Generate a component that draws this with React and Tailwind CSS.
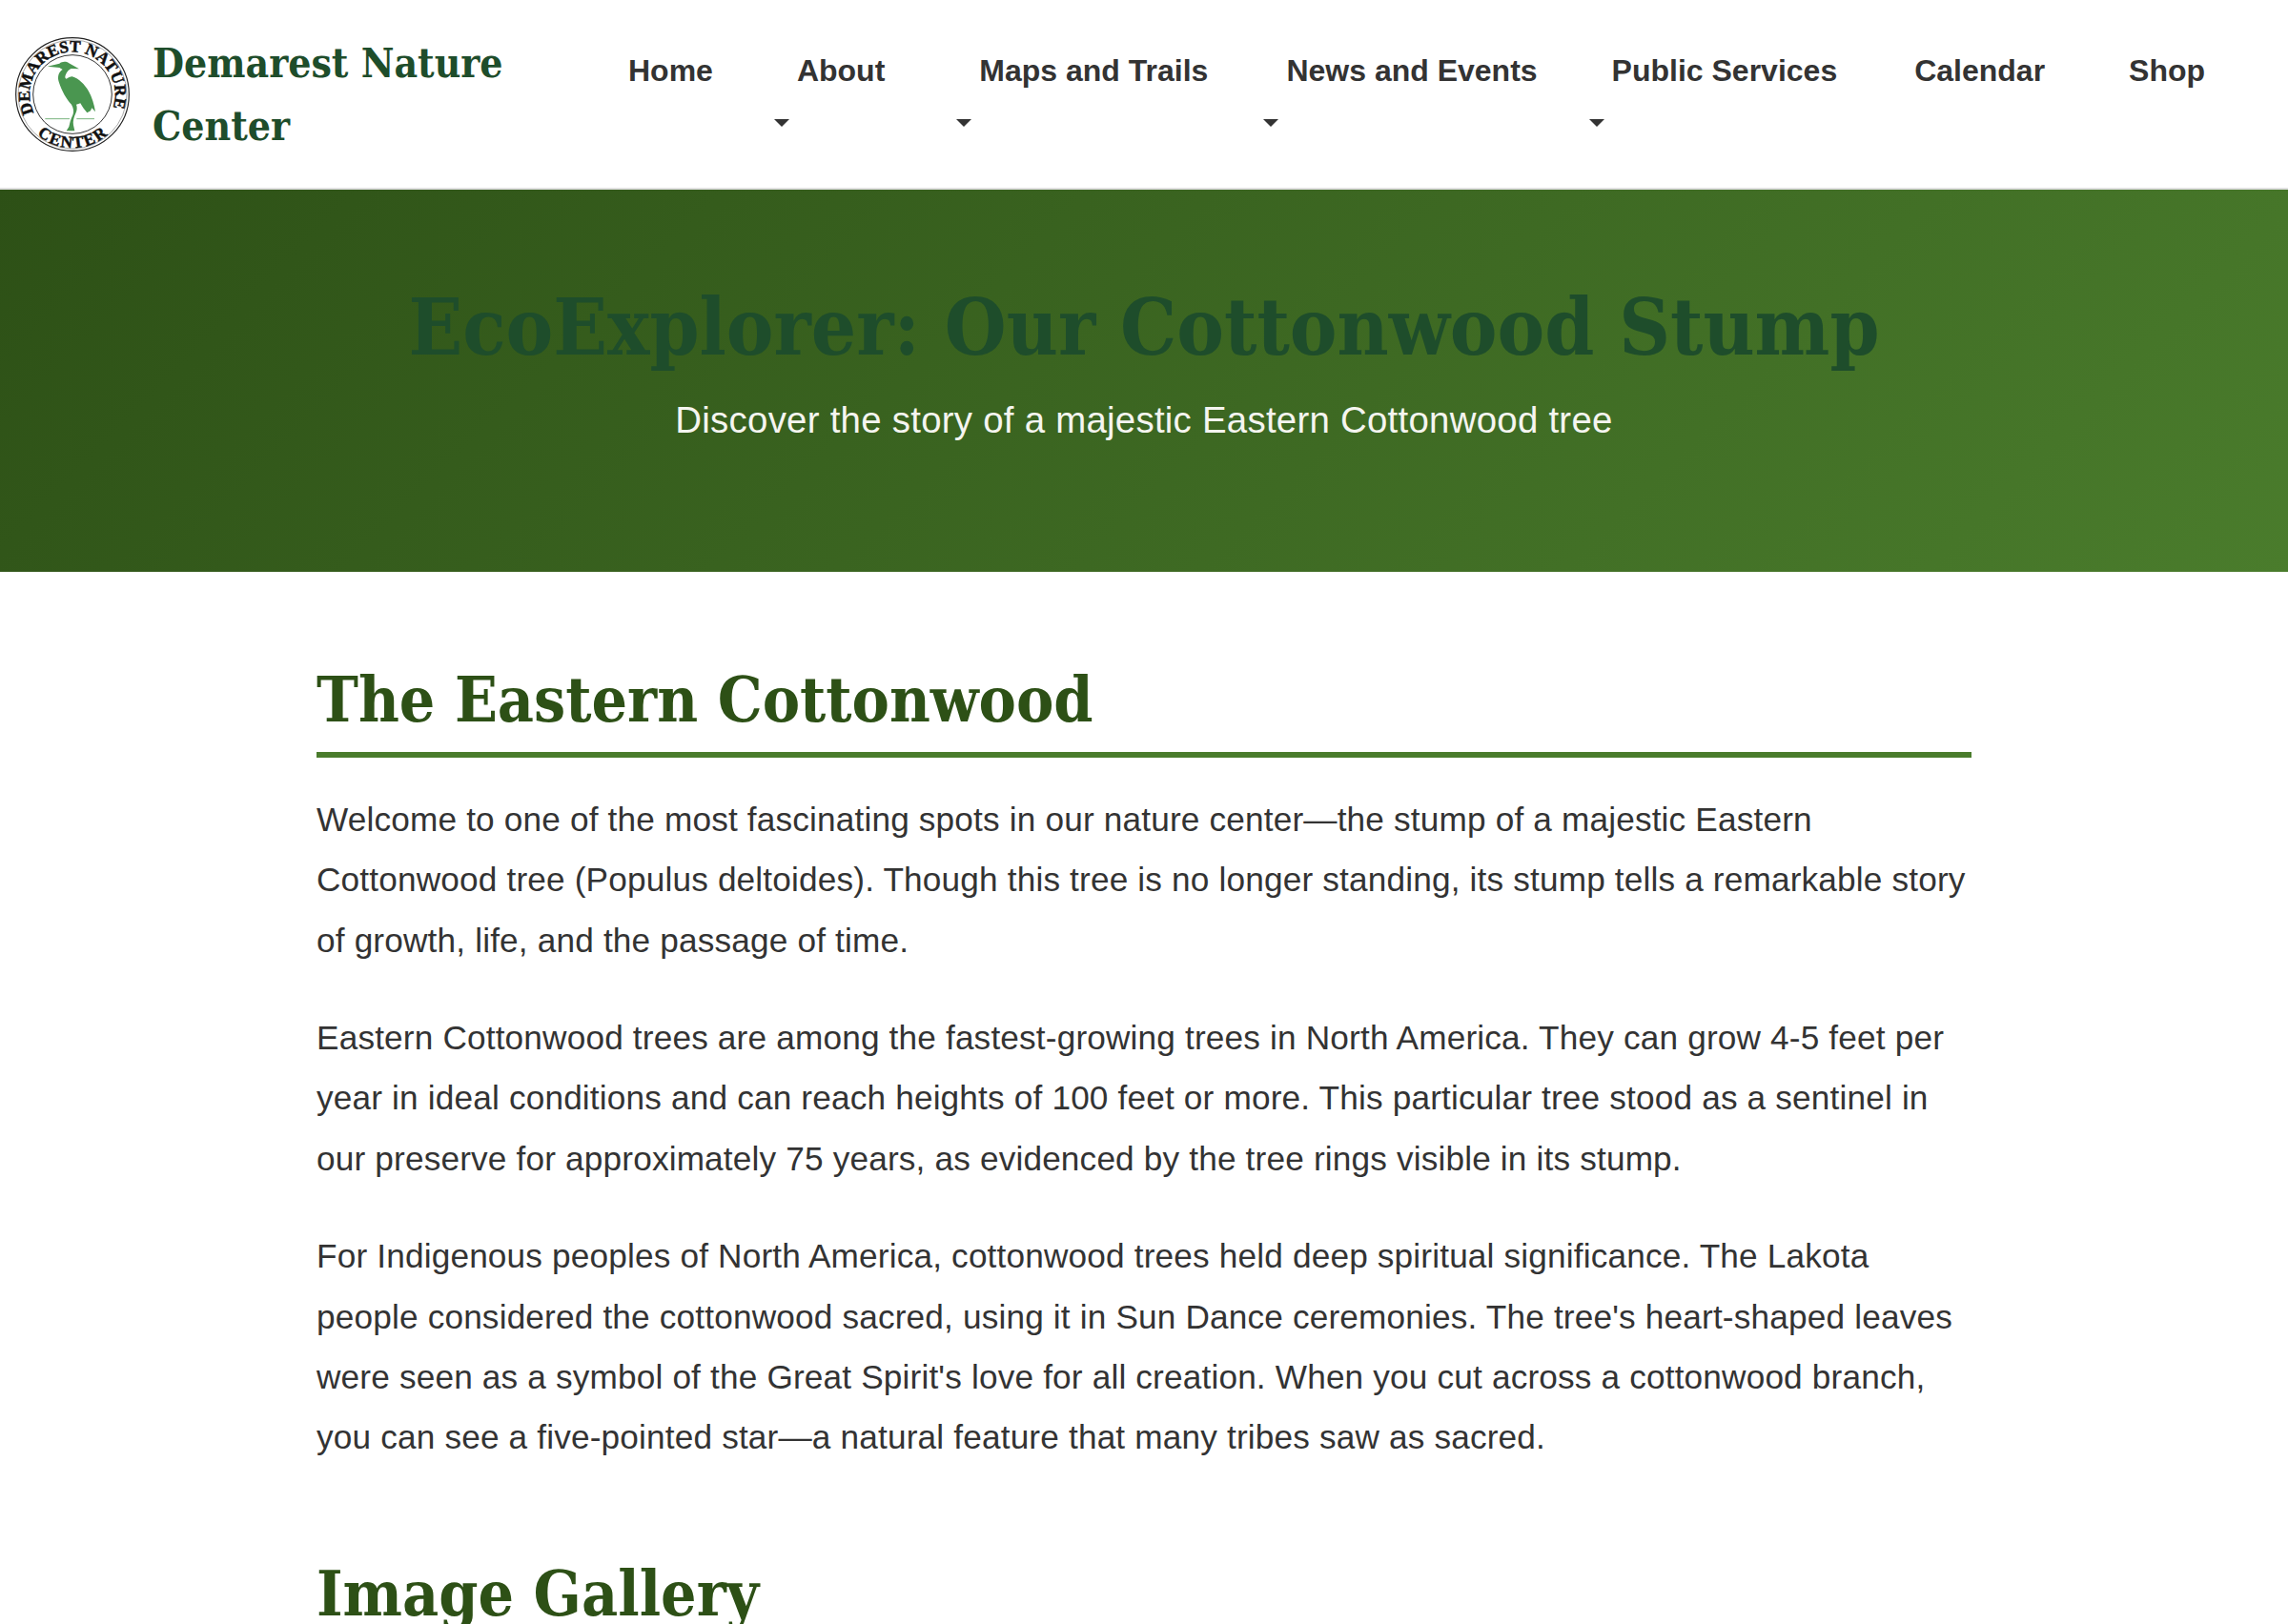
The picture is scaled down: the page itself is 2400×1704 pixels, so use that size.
import React from 'react';

const sans = { fontFamily: '"Liberation Sans", Arial, sans-serif' };
const serif = { fontFamily: '"Liberation Serif", "Times New Roman", serif' };
const display = { fontFamily: '"DejaVu Serif Condensed", "DejaVu Serif", serif' };

const navItems = [
    { label: 'Home', cls: 'ml-0' },
    { label: 'About', cls: 'ml-[88px]', caret: true },
    { label: 'Maps and Trails', cls: 'ml-[99px]', caret: true },
    { label: 'News and Events', cls: 'ml-[82px]', caret: true },
    { label: 'Public Services', cls: 'ml-[78px]', caret: true },
    { label: 'Calendar', cls: 'ml-[81px]' },
    { label: 'Shop', cls: 'ml-[88px]' },
];

// viewBox follows the crop of the logo, ring is about 358 units across
const Logo = () => (
    <svg viewBox="21 20 360 360" className="w-[120px] h-[120px] shrink-0">
        <circle cx="201" cy="200" r="178" fill="#fff" stroke="#222" strokeWidth="3.5" />
        <circle cx="201" cy="200" r="171" fill="none" stroke="#555" strokeWidth="1.5" />
        <circle cx="201" cy="200" r="124" fill="#fff" stroke="#333" strokeWidth="3" />
        <defs>
            <path id="ringTop" d="M 80 258 A 134 134 0 1 1 322 258" />
            <path id="ringBottom" d="M 81 318 A 168 168 0 0 0 321 318" />
        </defs>
        <text fontSize="52" fontWeight="700" fill="#111" stroke="#111" strokeWidth="1.5" style={serif}>
            <textPath href="#ringTop">DEMAREST NATURE</textPath>
        </text>
        <text fontSize="52" fontWeight="700" fill="#111" stroke="#111" strokeWidth="1.5" letterSpacing="5" style={serif}>
            <textPath href="#ringBottom" startOffset="12">CENTER</textPath>
        </text>
        {/* heron */}
        <path
            d="M122 112 L160 103 C168 97 180 95 190 102 L222 120 L197 119 C190 122 182 130 179 140 C177 146 178 150 182 151 C188 148 194 144 200 144 C222 150 240 170 252 190 C262 208 270 232 273 255 L262 243 L258 252 L247 258 C240 250 232 240 226 228 L213 232 C216 240 216 250 211 260 C205 272 202 285 204 297 L208 315 L182 315 L190 302 C193 290 195 278 202 265 C206 255 205 245 198 232 C182 215 168 190 158 160 C153 145 157 130 170 122 L160 116 Z"
            fill="#4a9650"
        />
        <path d="M115 277 H192 M214 277 H270" stroke="#7ab57e" strokeWidth="3" fill="none" />
    </svg>
);

const NavItem = ({ label, cls, caret }) => (
    <div className={`${cls} flex flex-col`}>
        <a className="text-[32px] leading-[48px] font-bold text-[#333] whitespace-nowrap" style={sans}>{label}</a>
        {caret && (
            <span className="ml-[-24px] mt-[27px] w-0 h-0 border-x-[8px] border-x-transparent border-t-[8px] border-t-[#333]" />
        )}
    </div>
);

const Heading = ({ children, className }) => (
    <h2 className={`text-[65.6px] leading-[77px] font-bold text-[#2d5016] ${className}`} style={display}>
        {children}
    </h2>
);

const paragraphs = [
    "Welcome to one of the most fascinating spots in our nature center—the stump of a majestic Eastern Cottonwood tree (Populus deltoides). Though this tree is no longer standing, its stump tells a remarkable story of growth, life, and the passage of time.",
    "Eastern Cottonwood trees are among the fastest-growing trees in North America. They can grow 4-5 feet per year in ideal conditions and can reach heights of 100 feet or more. This particular tree stood as a sentinel in our preserve for approximately 75 years, as evidenced by the tree rings visible in its stump.",
    "For Indigenous peoples of North America, cottonwood trees held deep spiritual significance. The Lakota people considered the cottonwood sacred, using it in Sun Dance ceremonies. The tree's heart-shaped leaves were seen as a symbol of the Great Spirit's love for all creation. When you cut across a cottonwood branch, you can see a five-pointed star—a natural feature that many tribes saw as sacred.",
];

const App = () => {
    return (
        <div className="h-[1704px] overflow-hidden bg-white" style={sans}>
            {/* Header */}
            <header className="h-[199px] flex items-center pl-[16px] border-b-2 border-[#e0e0e0]">
                <Logo />
                <div className="ml-[24px] w-[400px] text-[42.3px] leading-[66px] font-bold text-[#1e4d2b]" style={display}>
                    Demarest Nature Center
                </div>
                <nav className="ml-[99px] flex items-start self-start pt-[50px]">
                    {navItems.map((item) => (
                        <NavItem key={item.label} {...item} />
                    ))}
                </nav>
            </header>

            {/* Hero */}
            <section className="h-[401px] pt-[96px] text-center bg-[linear-gradient(135deg,#2d5016,#4a7c2c)]">
                <h1 className="text-[82.8px] leading-[96px] font-bold text-[#1e4d2b]" style={display}>
                    EcoExplorer: Our Cottonwood Stump
                </h1>
                <p className="mt-[26px] text-[38.4px] leading-[48px] tracking-[0.26px] text-[#f5f5f0]">
                    Discover the story of a majestic Eastern Cottonwood tree
                </p>
            </section>

            {/* Content */}
            <main className="w-[1736px] mx-auto pt-[95px]">
                <Heading className="pb-[17px] border-b-[6px] border-[#4a7c2c]">The Eastern Cottonwood</Heading>
                <div className="mt-[33px] space-y-[39px]">
                    {paragraphs.map((text) => (
                        <p key={text.slice(0, 12)} className="text-[35.2px] leading-[63.36px] tracking-[0.17px] text-[#333]">{text}</p>
                    ))}
                </div>
                <Heading className="mt-[93px]">Image Gallery</Heading>
            </main>
        </div>
    );
};

export default App;
